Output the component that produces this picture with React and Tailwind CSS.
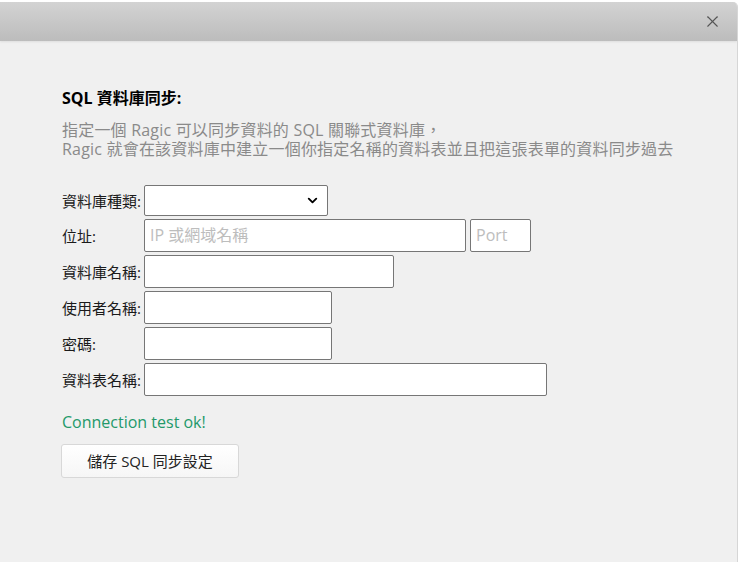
import { X, ChevronDown } from "lucide-react";

const font = { fontFamily: '"Open Sans", "Noto Sans CJK TC", sans-serif' };

const Field = ({ width, placeholder }) => (
  <div
    className={`h-[33px] ${width} rounded-[2px] border border-[#767676] bg-white px-[5px] text-[16px] leading-[31px] text-[#bdbdbd]`}
  >
    {placeholder}
  </div>
);

const Row = ({ label, children }) => (
  <div className="flex items-center">
    <div className="w-[82px] shrink-0 text-[15px] leading-[20px] text-[#1a1a1a]">{label}</div>
    {children}
  </div>
);

export default function App() {
  return (
    <div className="h-[562px] w-[740px] overflow-hidden bg-white pt-[2px]" style={font}>
      <div className="flex h-[560px] w-[738px] flex-col overflow-hidden rounded-tr-[5px] border-r border-[#d6d6d6] bg-[#f0f0f0]">
        {/* header */}
        <div className="flex h-[39px] shrink-0 items-center justify-end bg-gradient-to-b from-[#d3d3d3] to-[#bcbcbc] pr-[15px] shadow-[0_1px_2px_rgba(0,0,0,0.08)]">
          <X className="h-[19px] w-[19px] text-[#555]" strokeWidth={1.4} />
        </div>

        {/* body */}
        <div className="pl-[62px] pt-[46px]">
          <div className="text-[16px] font-bold leading-[22px] text-black">SQL 資料庫同步:</div>
          <div className="mt-[12px] text-[16px] leading-[19px] tracking-[0.2px] text-[#8a8a8a]">
            <div>指定一個 Ragic 可以同步資料的 SQL 關聯式資料庫，</div>
            <div>Ragic 就會在該資料庫中建立一個你指定名稱的資料表並且把這張表單的資料同步過去</div>
          </div>

          <div className="mt-[26px] flex flex-col gap-[3px]">
            <Row label="資料庫種類:">
              <div className="flex h-[31px] w-[184px] items-center justify-end rounded-[2px] border border-[#767676] bg-white pr-[7px]">
                <ChevronDown className="h-[15px] w-[15px] text-black" strokeWidth={3} />
              </div>
            </Row>
            <Row label="位址:">
              <div className="flex gap-[4px]">
                <Field width="w-[322px]" placeholder="IP 或網域名稱" />
                <Field width="w-[61px]" placeholder="Port" />
              </div>
            </Row>
            <Row label="資料庫名稱:">
              <Field width="w-[250px]" />
            </Row>
            <Row label="使用者名稱:">
              <Field width="w-[188px]" />
            </Row>
            <Row label="密碼:">
              <Field width="w-[188px]" />
            </Row>
            <Row label="資料表名稱:">
              <Field width="w-[403px]" />
            </Row>
          </div>

          <div className="mt-[15px] text-[16px] leading-[22px] text-[#23996a]">Connection test ok!</div>

          <button className="-ml-[1px] mt-[11px] h-[34px] w-[178px] rounded-[3px] border border-[#d8d8d8] bg-gradient-to-b from-white to-[#f6f6f6] text-[15px] text-[#222]">
            儲存 SQL 同步設定
          </button>
        </div>
      </div>
    </div>
  );
}
